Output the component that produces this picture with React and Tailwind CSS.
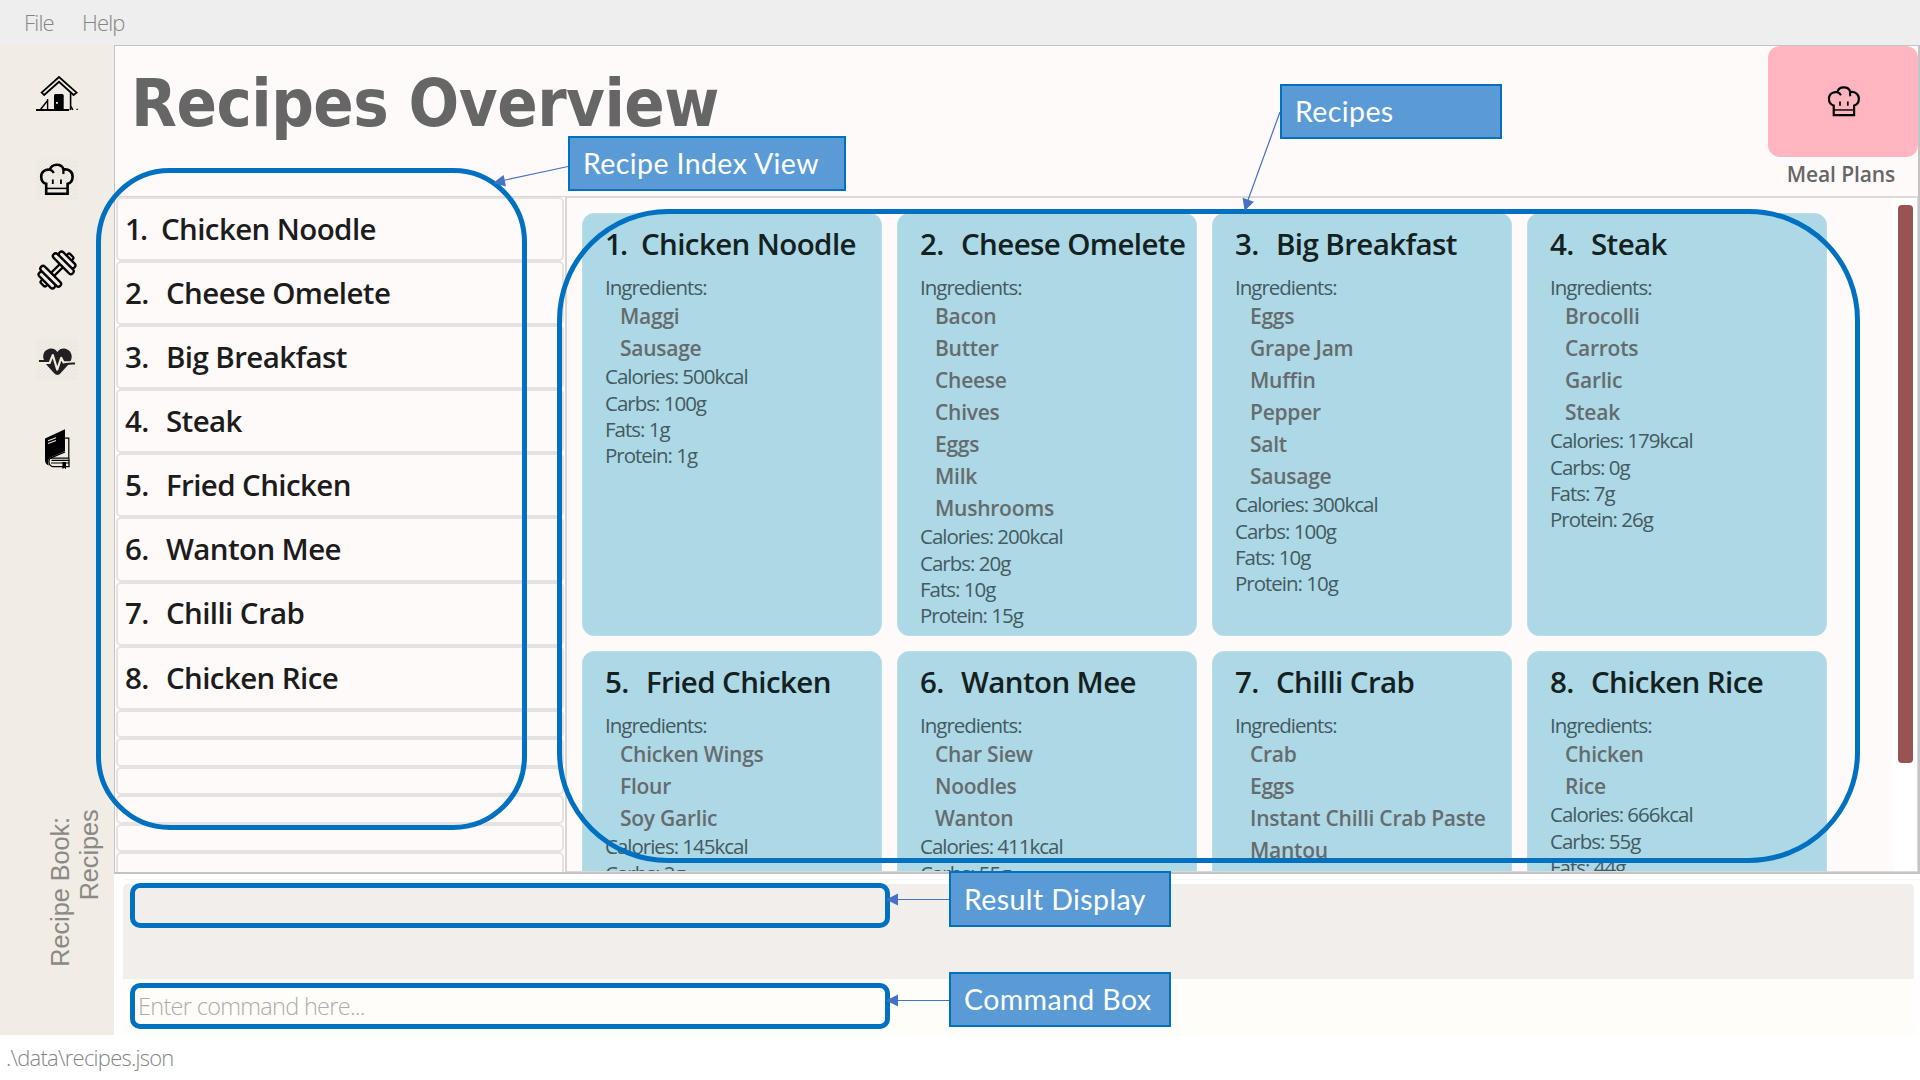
const SANS = "font-['Open_Sans','Noto_Sans',sans-serif]";

const recipes = [
  { name: "Chicken Noodle", ingredients: ["Maggi", "Sausage"], facts: ["Calories: 500kcal", "Carbs: 100g", "Fats: 1g", "Protein: 1g"] },
  { name: "Cheese Omelete", ingredients: ["Bacon", "Butter", "Cheese", "Chives", "Eggs", "Milk", "Mushrooms"], facts: ["Calories: 200kcal", "Carbs: 20g", "Fats: 10g", "Protein: 15g"] },
  { name: "Big Breakfast", ingredients: ["Eggs", "Grape Jam", "Muffin", "Pepper", "Salt", "Sausage"], facts: ["Calories: 300kcal", "Carbs: 100g", "Fats: 10g", "Protein: 10g"] },
  { name: "Steak", ingredients: ["Brocolli", "Carrots", "Garlic", "Steak"], facts: ["Calories: 179kcal", "Carbs: 0g", "Fats: 7g", "Protein: 26g"] },
  { name: "Fried Chicken", ingredients: ["Chicken Wings", "Flour", "Soy Garlic"], facts: ["Calories: 145kcal", "Carbs: 2g"] },
  { name: "Wanton Mee", ingredients: ["Char Siew", "Noodles", "Wanton"], facts: ["Calories: 411kcal", "Carbs: 55g"] },
  { name: "Chilli Crab", ingredients: ["Crab", "Eggs", "Instant Chilli Crab Paste", "Mantou", "Onions"], facts: [] },
  { name: "Chicken Rice", ingredients: ["Chicken", "Rice"], facts: ["Calories: 666kcal", "Carbs: 55g", "Fats: 44g"] },
];

function Hatch({ id, color }) {
  return (
    <>
      <pattern id={id} width="4" height="4" patternUnits="userSpaceOnUse">
        <path d="M-1 5L5 -1M-1 1L1 -1M3 5L5 3" stroke={color} strokeWidth="0.7" />
      </pattern>
      <rect width="42" height="41" fill={`url(#${id})`} stroke="none" />
    </>
  );
}

function HouseIcon() {
  return (
    <svg className="h-[42px] w-[42px]" viewBox="0 0 42 42" fill="none" stroke="#000">
      <path d="M5.6 19.6 L23 4 L40.6 19.6 L37.6 22 L23 8.8 L8.2 22 Z" strokeWidth="1.8" fill="#f1ede5" strokeLinejoin="miter" />
      <path d="M34.6 20 V37" strokeWidth="1.6" />
      <path d="M0 37 H33" strokeWidth="1.8" />
      <path d="M34 37 L35.5 34 L37 37 M40.5 36.4 h1.4" strokeWidth="1.2" />
      <path d="M11.6 26 V37 M4.5 36.5 L11.6 27.5" strokeWidth="1.4" />
      <path d="M18 37 V22.5 Q18 21 19.5 21 H26.2 Q27.7 21 27.7 22.5 V37 Z" fill="#000" stroke="none" />
      <rect x="20" y="29" width="1.8" height="1.8" fill="#f1ede5" stroke="none" />
    </svg>
  );
}

function ChefHatIcon({ id, hatch, weight, className }) {
  return (
    <svg className={className} viewBox="0 0 42 41" fill="none" stroke="#000">
      <Hatch id={id} color={hatch} />
      <path
        d="M10.2 34.8 V24.8 C6.6 23.9 5.2 20.4 5.2 17.4 C5.2 12.8 9.4 9.8 14 10.8 C14.6 7.6 17.6 5.7 20.8 5.7 C24 5.7 26.8 7.6 27.6 10.6 C32.4 9.6 36.6 12.8 36.6 17.4 C36.6 20.4 35.2 23.9 31.6 24.8 V34.8 Z"
        strokeWidth={weight}
      />
      <path d="M13.6 10.6 Q16.6 11.2 17.8 14 M27.8 10.4 Q27 12.6 27.6 15" strokeWidth="2.2" />
      <path d="M10.2 29.4 H31.6" strokeWidth="1.5" />
      <path d="M16.8 20.4 V25 M25 20.4 V25" strokeWidth="1.8" />
    </svg>
  );
}

function DumbbellIcon() {
  return (
    <svg className="h-[42px] w-[42px]" viewBox="0 0 42 42" fill="#f1ede5" stroke="#000" strokeWidth="2.3">
      <g transform="translate(21 20) rotate(-45)">
        <rect x="-8" y="-2.2" width="16" height="4.4" />
        <rect x="16" y="-3.6" width="4.6" height="7.2" rx="1.8" />
        <rect x="-20.6" y="-3.6" width="4.6" height="7.2" rx="1.8" />
        <rect x="11.6" y="-10.5" width="5.4" height="21" rx="2.6" />
        <rect x="-17" y="-10.5" width="5.4" height="21" rx="2.6" />
        <rect x="6.2" y="-13.5" width="5.4" height="27" rx="2.6" />
        <rect x="-11.6" y="-13.5" width="5.4" height="27" rx="2.6" />
      </g>
    </svg>
  );
}

function HeartPulseIcon() {
  return (
    <svg className="h-[41px] w-[42px]" viewBox="0 0 42 41" fill="none">
      <Hatch id="hatch-heart" color="#e2ded6" />
      <path
        d="M21.4 13 C19.4 9.6 15.6 9 12.6 9.9 C8.2 11.2 6.4 15.6 7.6 20 C9 25.4 15.4 30.6 18 34 Q19.6 36 21.4 36 Q23.2 36 24.8 34 C27.4 30.6 33.8 25.6 35.4 20 C36.6 15.6 34.4 11.2 30.2 9.9 C27 9 23.4 9.6 21.4 13 Z"
        fill="#231f20"
      />
      <path d="M3 24 H13.6 L16.8 16 L21.2 30.6 L25.2 18.8 L27.6 23.4 H39" stroke="#f1ede5" strokeWidth="2.1" strokeLinejoin="round" />
      <path d="M3 22 H13 M28.4 25.2 Q34 24.4 39 24.6" stroke="#231f20" strokeWidth="2" />
    </svg>
  );
}

function BookIcon() {
  return (
    <svg className="h-[42px] w-[42px]" viewBox="0 0 42 42" fill="none" stroke="#000">
      <path d="M28 10.2 H32.8 V30.2 H14" strokeWidth="1.2" />
      <path d="M9 10.4 L29 1.2 V23 L14.5 29.4 Q12 30.8 12 34 Q12 36 13 37.6 Q9 36.4 9 32 Z" fill="#000" stroke="none" />
      <path d="M29 23.8 L15 29.8 Q12.2 31.4 13.2 35.6 Q14 38 16.5 38.6 H33 V30.6" strokeWidth="1.3" />
      <path d="M15.5 32.4 H33 M15 35 H33" strokeWidth="1.1" />
      <path d="M12 12.8 L20 9.8 M12 15.4 L20 12.4" stroke="#f1ede5" strokeWidth="1.1" />
      <path d="M26.4 34 H30 V41.2 L28.2 39.8 L26.4 41.2 Z" fill="#000" stroke="none" />
    </svg>
  );
}

function Sidebar() {
  return (
    <aside className="flex w-[114px] shrink-0 flex-col bg-[#f1ede5]">
      <nav className="flex flex-col items-start pl-9 pt-7">
        <HouseIcon />
        <ChefHatIcon id="hatch-side" hatch="#e2ded6" weight="2.6" className="mt-11 h-[41px] w-[42px]" />
        <div className="mt-[50px]"><DumbbellIcon /></div>
        <div className="mt-[47px]"><HeartPulseIcon /></div>
        <div className="mt-12"><BookIcon /></div>
      </nav>
      <div className="mt-auto flex h-[228px] items-start pl-[46px] font-['Liberation_Sans',Arial,sans-serif] text-[26.5px] leading-[29px] text-[#8b8986]">
        <span className="mt-[6px] rotate-180 scale-y-[0.95] whitespace-nowrap [writing-mode:vertical-rl]">Recipe Book:</span>
        <span className="rotate-180 scale-y-[0.95] whitespace-nowrap [writing-mode:vertical-rl]">Recipes</span>
      </div>
    </aside>
  );
}

function NumberedName({ index, name }) {
  return (
    <>
      <span className={index === 1 ? "w-[36px] tracking-[-2px]" : "w-[41px]"}>{index}.</span>
      <span>{name}</span>
    </>
  );
}

function IndexList() {
  return (
    <div className="flex w-[452px] shrink-0 flex-col overflow-hidden border-r-2 border-t border-[#d9d6d5] pl-px pr-px">
      {recipes.map((r, i) => (
        <div key={r.name} className="flex h-[64.1px] shrink-0 items-center rounded-[5px] border-2 border-[#e6e2e1] pl-[7px] text-[29.5px] font-semibold tracking-[-0.6px] text-[#1c1c1c]">
          <NumberedName index={i + 1} name={r.name} />
        </div>
      ))}
      {[0, 1, 2, 3, 4, 5].map((i) => (
        <div key={i} className="h-[28.5px] shrink-0 rounded-[5px] border-2 border-[#e6e2e1]" />
      ))}
    </div>
  );
}

function RecipeCard({ index, recipe }) {
  return (
    <article className="h-[423px] w-[300px] rounded-xl border border-[#b9dde9] bg-[#add8e6] pl-[22px] pt-[10.5px]">
      <h2 className="flex whitespace-nowrap text-[29.5px] font-semibold leading-10 tracking-[-0.6px] text-[#14211f]">
        <NumberedName index={index} name={recipe.name} />
      </h2>
      <div className="text-[20.5px] leading-[26.2px] tracking-[-1px] text-[#445a60]">
        <p className="mt-[9.5px]">Ingredients:</p>
        <ul className="-mb-px pl-[15px] pt-[0.7px] text-[21px] font-semibold leading-8 tracking-[-0.25px] text-[#666b6d]">
          {recipe.ingredients.map((item) => (
            <li key={item} className="whitespace-nowrap">{item}</li>
          ))}
        </ul>
        {recipe.facts.map((fact) => (
          <p key={fact}>{fact}</p>
        ))}
      </div>
    </article>
  );
}

function Callout({ className, children }) {
  return (
    <div className={`absolute flex items-center border-2 border-[#0070c0] bg-[#5b9bd5] pl-[13px] font-['Lato',sans-serif] text-white ${className}`}>
      <span className="whitespace-nowrap">{children}</span>
    </div>
  );
}

function Annotations() {
  return (
    <div className="pointer-events-none absolute inset-0 text-[28.5px] tracking-[0.4px]">
      <div className="absolute left-[96px] top-[168px] h-[662px] w-[431px] rounded-[74px] border-[5px] border-[#0070c0]" />
      <div className="absolute left-[557px] top-[209px] h-[654px] w-[1303px] rounded-[111px] border-[5px] border-[#0070c0]" />
      <div className="absolute left-[130px] top-[883px] h-[45px] w-[760px] rounded-[10px] border-[5px] border-[#0070c0]" />
      <div className="absolute left-[130px] top-[983px] h-[46px] w-[760px] rounded-[10px] border-[5px] border-[#0070c0]" />
      <svg className="absolute inset-0 h-full w-full" viewBox="0 0 1920 1080" fill="#4472c4" stroke="#4472c4">
        <path d="M568 166.5L503 180.5M1280 112L1248 200M949 899.5H896M949 1000.5H896" strokeWidth="1.2" fill="none" />
        <path d="M493 183L503.6 174.9L506 186.6ZM1244.6 211L1242.6 197.8L1253.9 201.7ZM886 899.5L898 893.5V905.5ZM886 1000.5L898 994.5V1006.5Z" stroke="none" />
      </svg>
      <Callout className="left-[568px] top-[136px] h-[55px] w-[278px]">Recipe Index View</Callout>
      <Callout className="left-[1280px] top-[84px] h-[55px] w-[222px]">Recipes</Callout>
      <Callout className="left-[949px] top-[871px] h-[56px] w-[222px]">Result Display</Callout>
      <Callout className="left-[949px] top-[972px] h-[55px] w-[222px]">Command Box</Callout>
    </div>
  );
}

export default function App() {
  return (
    <div className={`relative flex h-[1080px] w-[1920px] flex-col overflow-hidden bg-white ${SANS}`}>
      <header className="flex h-[45px] shrink-0 items-center gap-7 bg-[#eeeeee] pl-6 text-[22px] font-light tracking-[-0.8px] text-[#858585]">
        <span>File</span>
        <span>Help</span>
      </header>

      <div className="flex h-[990px] shrink-0">
        <Sidebar />
        <main className="flex min-w-0 flex-1 flex-col">
          <section className="flex h-[829px] flex-col border border-b-2 border-r-2 border-[#c4c4c4] bg-[#fffafa]">
            <div className="flex h-[150px] shrink-0 justify-between">
              <h1 className="pl-4 pt-[14px] font-['DejaVu_Sans_Condensed','DejaVu_Sans',sans-serif] text-[66.3px] font-bold leading-[86px] tracking-[-0.5px] text-[#666666]">Recipes Overview</h1>
              <div className="flex w-[150px] flex-col items-center">
                <div className="flex h-[111px] w-full items-center justify-center rounded-xl bg-[#ffb6c1] pl-px">
                  <ChefHatIcon id="hatch-meal" hatch="#f9b1bc" weight="2.3" className="h-[39px] w-10" />
                </div>
                <span className="mr-1 mt-px whitespace-nowrap text-[21px] font-semibold leading-8 tracking-[-0.1px] text-[#666666]">Meal Plans</span>
              </div>
            </div>
            <div className="flex min-h-0 flex-1">
              <IndexList />
              <div className="flex min-w-0 flex-1 overflow-hidden border-b border-r border-t-2 border-[#dcdad9]">
                <div className="grid flex-1 grid-cols-[repeat(4,300px)] content-start gap-[15px] pl-[15px] pt-[14.5px]">
                  {recipes.map((r, i) => (
                    <RecipeCard key={r.name} index={i + 1} recipe={r} />
                  ))}
                </div>
                <div className="flex w-[24px] justify-center bg-white pl-px pt-[7px]">
                  <div className="h-[558px] w-[15px] rounded-[4px] bg-[#995353]" />
                </div>
              </div>
            </div>
          </section>
          <section className="flex h-[161px] flex-col bg-white pl-[9px]">
            <div className="mt-[5px] h-[5px] border-t border-[#f6f6f6]" />
            <div className="mr-[6px] h-[95px] rounded-t-[5px] bg-[#f1eeeb]" />
            <div className="mr-1 flex flex-1 items-center bg-[#fffdf9] pl-[15px] text-[23.5px] font-light tracking-[-0.7px] text-[#acacac]">Enter command here...</div>
          </section>
        </main>
      </div>

      <footer className="flex flex-1 items-center bg-white pl-1.5 text-[22px] font-light tracking-[-0.75px] text-[#858585]">.\data\recipes.json</footer>
      <Annotations />
    </div>
  );
}
